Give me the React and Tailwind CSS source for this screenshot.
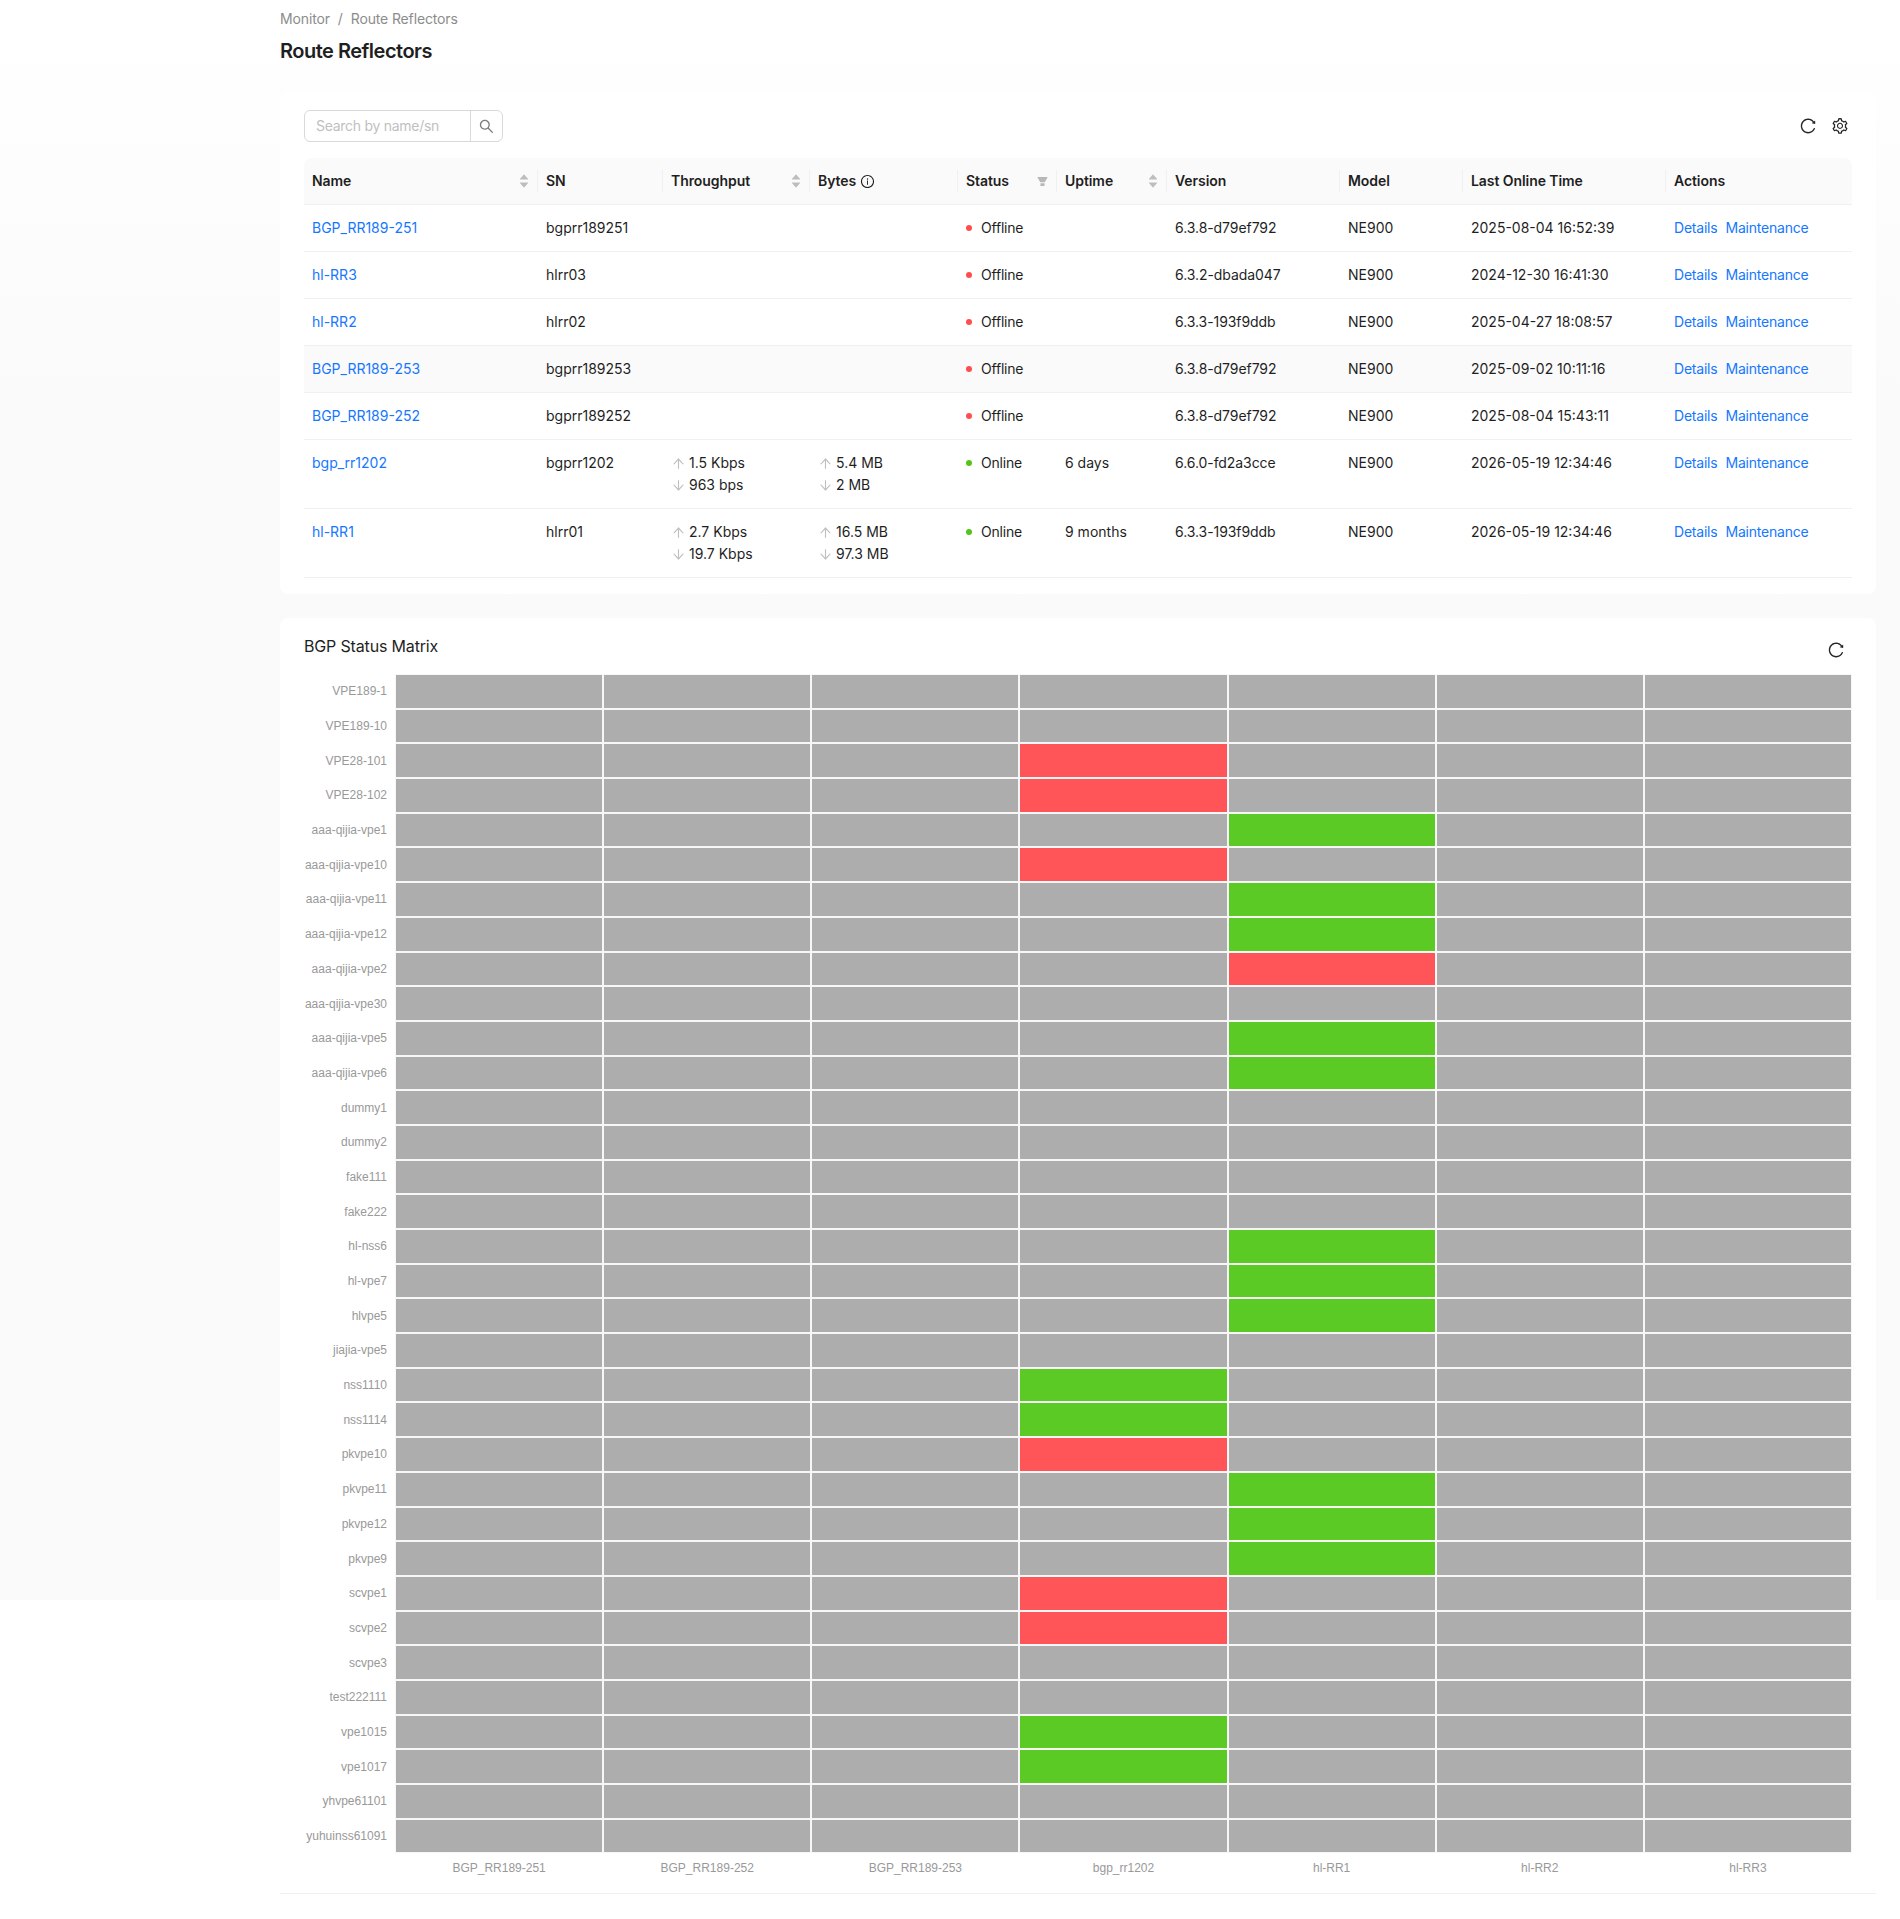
import React from 'react';
import {
  AiOutlineReload,
  AiOutlineSetting,
  AiOutlineSearch,
  AiOutlineInfoCircle,
  AiFillFilter,
  AiFillCaretUp,
  AiFillCaretDown,
  AiOutlineArrowUp,
  AiOutlineArrowDown,
} from 'react-icons/ai';

const devices = [
  { name: 'BGP_RR189-251', sn: 'bgprr189251', online: false, version: '6.3.8-d79ef792', last: '2025-08-04 16:52:39' },
  { name: 'hl-RR3', sn: 'hlrr03', online: false, version: '6.3.2-dbada047', last: '2024-12-30 16:41:30' },
  { name: 'hl-RR2', sn: 'hlrr02', online: false, version: '6.3.3-193f9ddb', last: '2025-04-27 18:08:57' },
  { name: 'BGP_RR189-253', sn: 'bgprr189253', online: false, version: '6.3.8-d79ef792', last: '2025-09-02 10:11:16', hover: true },
  { name: 'BGP_RR189-252', sn: 'bgprr189252', online: false, version: '6.3.8-d79ef792', last: '2025-08-04 15:43:11' },
  { name: 'bgp_rr1202', sn: 'bgprr1202', online: true, tx: '1.5 Kbps', rx: '963 bps', up: '5.4 MB', down: '2 MB', uptime: '6 days', version: '6.6.0-fd2a3cce', last: '2026-05-19 12:34:46' },
  { name: 'hl-RR1', sn: 'hlrr01', online: true, tx: '2.7 Kbps', rx: '19.7 Kbps', up: '16.5 MB', down: '97.3 MB', uptime: '9 months', version: '6.3.3-193f9ddb', last: '2026-05-19 12:34:46' },
];

const columns = ['BGP_RR189-251', 'BGP_RR189-252', 'BGP_RR189-253', 'bgp_rr1202', 'hl-RR1', 'hl-RR2', 'hl-RR3'];

// [row label, column index of the coloured cell, state]
const matrix = [
  ['VPE189-1'], ['VPE189-10'], ['VPE28-101', 3, 'down'], ['VPE28-102', 3, 'down'],
  ['aaa-qijia-vpe1', 4, 'up'], ['aaa-qijia-vpe10', 3, 'down'], ['aaa-qijia-vpe11', 4, 'up'], ['aaa-qijia-vpe12', 4, 'up'],
  ['aaa-qijia-vpe2', 4, 'down'], ['aaa-qijia-vpe30'], ['aaa-qijia-vpe5', 4, 'up'], ['aaa-qijia-vpe6', 4, 'up'],
  ['dummy1'], ['dummy2'], ['fake111'], ['fake222'],
  ['hl-nss6', 4, 'up'], ['hl-vpe7', 4, 'up'], ['hlvpe5', 4, 'up'], ['jiajia-vpe5'],
  ['nss1110', 3, 'up'], ['nss1114', 3, 'up'], ['pkvpe10', 3, 'down'], ['pkvpe11', 4, 'up'],
  ['pkvpe12', 4, 'up'], ['pkvpe9', 4, 'up'], ['scvpe1', 3, 'down'], ['scvpe2', 3, 'down'],
  ['scvpe3'], ['test222111'], ['vpe1015', 3, 'up'], ['vpe1017', 3, 'up'],
  ['yhvpe61101'], ['yuhuinss61091'],
];

function SortIcon() {
  return (
    <span className="flex flex-col text-[#bdbdbd] text-[12px] leading-none">
      <AiFillCaretUp className="-mb-[2px]" />
      <AiFillCaretDown className="-mt-[2px]" />
    </span>
  );
}

function Th({ children, icon, last }) {
  return (
    <th className="relative px-2 py-3 text-left font-semibold text-[#1f1f1f] tracking-[-0.005em] border-b border-[#f0f0f0] bg-[#fafafa] first:rounded-tl-lg last:rounded-tr-lg">
      <div className="flex items-center justify-between">
        <span className="flex items-center gap-1">{children}</span>
        {icon}
      </div>
      {!last && <span className="absolute right-0 top-1/2 -translate-y-1/2 h-[22px] w-px bg-[#f0f0f0]" />}
    </th>
  );
}

function Rate({ up, down }) {
  if (!up) return null;
  return (
    <div className="flex flex-col">
      <span className="flex items-center gap-[3px]"><AiOutlineArrowUp className="text-[#bfbfbf] text-[15px]" />{up}</span>
      <span className="flex items-center gap-[3px]"><AiOutlineArrowDown className="text-[#bfbfbf] text-[15px]" />{down}</span>
    </div>
  );
}

function DeviceRow({ d }) {
  const cell = 'px-2 py-3 align-top border-b border-[#f0f0f0]';
  return (
    <tr className={d.hover ? 'bg-[#fafafa]' : ''}>
      <td className={`${cell} text-[#1677ff]`}>{d.name}</td>
      <td className={cell}>{d.sn}</td>
      <td className={cell}><Rate up={d.tx} down={d.rx} /></td>
      <td className={cell}><Rate up={d.up} down={d.down} /></td>
      <td className={cell}>
        <span className="flex items-center gap-[9px] tracking-[-0.015em]">
          <span className={`w-1.5 h-1.5 rounded-full ${d.online ? 'bg-[#52c41a]' : 'bg-[#ff4d4f]'}`} />
          {d.online ? 'Online' : 'Offline'}
        </span>
      </td>
      <td className={cell}>{d.uptime}</td>
      <td className={`${cell} tracking-[-0.005em]`}>{d.version}</td>
      <td className={cell}>NE900</td>
      <td className={cell}>{d.last}</td>
      <td className={`${cell} text-[#1677ff] tracking-[-0.015em]`}>
        <span className="flex gap-2"><span>Details</span><span>Maintenance</span></span>
      </td>
    </tr>
  );
}

function Matrix() {
  return (
    <div className="font-['Liberation_Sans',sans-serif] text-[12px] text-[#999999]">
      <div className="grid grid-cols-[92px_repeat(7,208.15px)] grid-rows-[repeat(34,34.7px)] w-[1549px]">
        {matrix.map(([label, col, state]) => (
          <React.Fragment key={label}>
            <div className="flex items-center justify-end pr-[8px] whitespace-nowrap">{label}</div>
            {columns.map((c, i) => {
              let color = 'bg-[#adadad]';
              if (i === col) color = state === 'up' ? 'bg-[#5bca25]' : 'bg-[#ff5558]';
              return <div key={c} className={`${color} border border-[#f7f7f7]`} />;
            })}
          </React.Fragment>
        ))}
      </div>
      <div className="grid grid-cols-[92px_repeat(7,208.15px)] w-[1549px] h-[30px] items-center">
        <div />
        {columns.map((c) => (
          <div key={c} className="text-center">{c}</div>
        ))}
      </div>
    </div>
  );
}

export default function App() {
  return (
    <div className="h-[1919px] overflow-hidden bg-white font-['Inter',sans-serif] text-[14px] leading-[22px] text-[#1f1f1f]">
      <div className="h-[1600px] bg-linear-to-b from-white to-[#fafafa] to-[25%] pl-[280px] pr-[24px]">
        <div className="h-[92px] pt-[8px]">
          <div className="flex gap-2 text-[#8c8c8c] h-[22px] tracking-[-0.01em]">
            <span>Monitor</span><span>/</span><span>Route Reflectors</span>
          </div>
          <h1 className="mt-[7px] text-[20px] leading-[28px] font-semibold tracking-[-0.025em]">Route Reflectors</h1>
        </div>

        <section className="bg-white rounded-lg px-6 pt-[18px] pb-4 h-[502px]">
          <div className="flex items-center justify-between h-8">
            <div className="flex w-[199px] h-8 border border-[#d9d9d9] rounded-md">
              <span className="flex-1 pl-[11px] leading-[30px] text-[#bfbfbf] tracking-[-0.02em]">Search by name/sn</span>
              <span className="w-8 flex items-center justify-center border-l border-[#d9d9d9] text-[#7a7a7a]"><AiOutlineSearch className="text-[17px]" /></span>
            </div>
            <div className="flex items-center gap-[14px] pr-[3px] text-[#262626] text-[18px]">
              <AiOutlineReload />
              <AiOutlineSetting className="text-[18px]" />
            </div>
          </div>

          <table className="w-[1548px] mt-4 table-fixed border-separate border-spacing-0">
            <colgroup>
              <col className="w-[234px]" />
              <col className="w-[125px]" />
              <col className="w-[147px]" />
              <col className="w-[148px]" />
              <col className="w-[99px]" />
              <col className="w-[110px]" />
              <col className="w-[173px]" />
              <col className="w-[123px]" />
              <col className="w-[203px]" />
              <col className="w-[186px]" />
            </colgroup>
            <thead>
              <tr>
                <Th icon={<SortIcon />}><span>Name</span></Th>
                <Th>SN</Th>
                <Th icon={<SortIcon />}>Throughput</Th>
                <Th>Bytes <AiOutlineInfoCircle className="text-[#1f1f1f] text-[15px]" /></Th>
                <Th icon={<AiFillFilter className="text-[#b8b8b8] text-[13px]" />}>Status</Th>
                <Th icon={<SortIcon />}>Uptime</Th>
                <Th>Version</Th>
                <Th>Model</Th>
                <Th>Last Online Time</Th>
                <Th last>Actions</Th>
              </tr>
            </thead>
            <tbody>
              {devices.map((d) => <DeviceRow key={d.name} d={d} />)}
            </tbody>
          </table>
        </section>

        <section className="bg-white rounded-t-lg mt-[24px] h-[1301px] pt-[16px] px-6">
          <div className="flex items-center justify-between h-[24px]">
            <h2 className="text-[16px] font-normal tracking-[-0.01em]">BGP Status Matrix</h2>
            <AiOutlineReload className="text-[18px] text-[#262626] mr-[7px] mt-[7px]" />
          </div>
          <div className="mt-4 -ml-px"><Matrix /></div>
          <div className="-mx-6 mt-[10px] border-t border-[#f0f0f0]" />
        </section>
      </div>
    </div>
  );
}
